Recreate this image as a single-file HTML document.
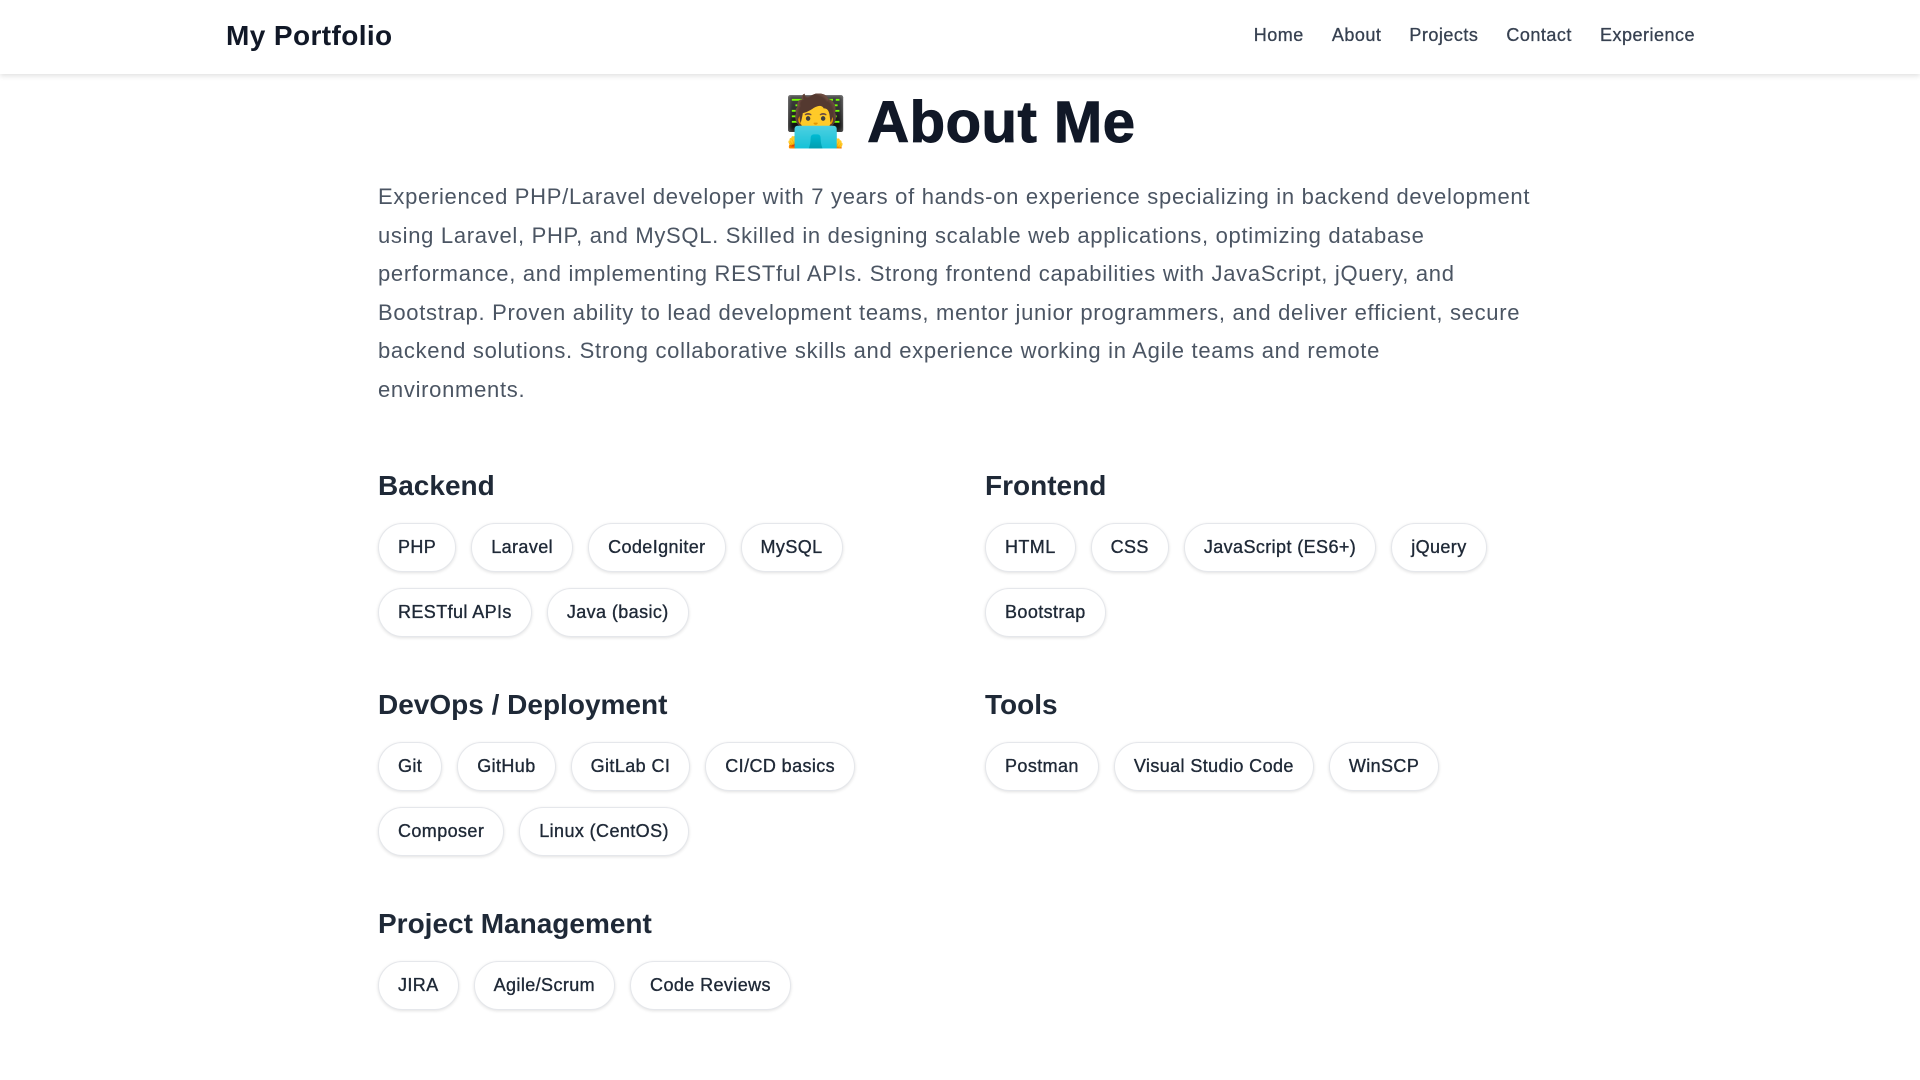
<!DOCTYPE html>
<html><head><meta charset="utf-8">
<style>
*{box-sizing:border-box;margin:0;padding:0}
body{width:1920px;height:1080px;background:#fff;font-family:"Liberation Sans",sans-serif;color:#111827;overflow:hidden;position:relative}
header{position:absolute;left:0;top:0;width:1920px;height:74px;background:#fff;box-shadow:0 2px 5px rgba(0,0,0,.12);z-index:2}
.logo{position:absolute;left:226px;top:20px;font-size:28px;font-weight:bold;color:#111827;letter-spacing:0.4px}
nav{position:absolute;right:225px;top:25px;display:flex;gap:28px;font-size:18px;color:#374151;letter-spacing:0.5px;-webkit-text-stroke:0.3px #374151}
h1{position:absolute;left:0;width:1920px;top:89px;text-align:center;font-size:58px;font-weight:900;color:#111827;letter-spacing:0.5px;-webkit-text-stroke:1px #111827}
h1 .emo{font-family:"Noto Color Emoji","DejaVu Sans",sans-serif;font-size:50px;margin-right:20px;vertical-align:4px}
p.lead{position:absolute;left:378px;top:178px;font-size:22px;line-height:38.6px;color:#4b5563;white-space:nowrap;letter-spacing:0.7px}
.sec{position:absolute}
.sec h2{font-size:28px;font-weight:bold;color:#1f2937;height:40px;line-height:40px}
.pills{display:flex;flex-wrap:wrap;gap:16px 15px;margin-top:17px;width:520px}
.pill{height:49px;line-height:47px;padding:0 19px;border:1px solid #e5e7eb;border-radius:25px;font-size:18px;color:#1f2937;box-shadow:0 1px 3px rgba(0,0,0,.12);background:#fff;letter-spacing:0.4px;-webkit-text-stroke:0.35px #1f2937}
</style></head><body>
<header><div class="logo">My Portfolio</div>
<nav><span>Home</span><span>About</span><span>Projects</span><span>Contact</span><span>Experience</span></nav></header>
<h1><span class="emo">🧑‍💻</span>About Me</h1>
<p class="lead">Experienced PHP/Laravel developer with 7 years of hands-on experience specializing in backend development<br>using Laravel, PHP, and MySQL. Skilled in designing scalable web applications, optimizing database<br>performance, and implementing RESTful APIs. Strong frontend capabilities with JavaScript, jQuery, and<br>Bootstrap. Proven ability to lead development teams, mentor junior programmers, and deliver efficient, secure<br>backend solutions. Strong collaborative skills and experience working in Agile teams and remote<br>environments.</p>

<div class="sec" style="left:378px;top:466px"><h2>Backend</h2><div class="pills">
<span class="pill">PHP</span><span class="pill">Laravel</span><span class="pill">CodeIgniter</span><span class="pill">MySQL</span><span class="pill">RESTful APIs</span><span class="pill">Java (basic)</span></div></div>

<div class="sec" style="left:985px;top:466px"><h2>Frontend</h2><div class="pills">
<span class="pill">HTML</span><span class="pill">CSS</span><span class="pill">JavaScript (ES6+)</span><span class="pill">jQuery</span><span class="pill">Bootstrap</span></div></div>

<div class="sec" style="left:378px;top:685px"><h2>DevOps / Deployment</h2><div class="pills">
<span class="pill">Git</span><span class="pill">GitHub</span><span class="pill">GitLab CI</span><span class="pill">CI/CD basics</span><span class="pill">Composer</span><span class="pill">Linux (CentOS)</span></div></div>

<div class="sec" style="left:985px;top:685px"><h2>Tools</h2><div class="pills">
<span class="pill">Postman</span><span class="pill">Visual Studio Code</span><span class="pill">WinSCP</span></div></div>

<div class="sec" style="left:378px;top:904px"><h2>Project Management</h2><div class="pills">
<span class="pill">JIRA</span><span class="pill">Agile/Scrum</span><span class="pill">Code Reviews</span></div></div>
</body></html>
